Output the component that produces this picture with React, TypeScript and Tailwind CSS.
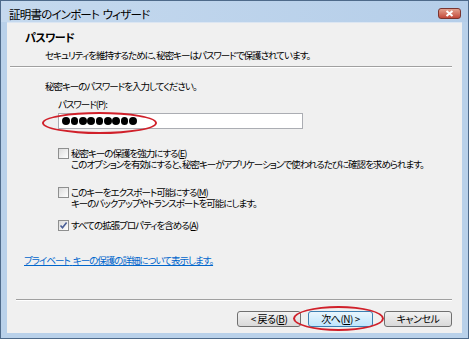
import React from "react";

function Check({ checked }: { checked?: boolean }) {
  return (
    <div className="w-[11px] h-[11px] border border-[#8e8f8f] bg-gradient-to-br from-[#dcdcdc] to-[#ffffff] flex items-center justify-center shrink-0">
      {checked && (
        <svg width="9" height="9" viewBox="0 0 9 9">
          <path d="M1.5 4.5 L3.5 6.8 L7.6 1.6" fill="none" stroke="#4a5f97" strokeWidth="1.6" />
        </svg>
      )}
    </div>
  );
}

function Btn({ w, label, def }: { w: string; label: React.ReactNode; def?: boolean }) {
  return (
    <div
      className={
        "h-[16px] rounded-[3px] border flex items-center justify-center text-[10px] tracking-[-0.5px] leading-none text-black whitespace-nowrap " +
        w +
        (def
          ? " border-[#3c7fb1] bg-gradient-to-b from-[#eaf6fd] to-[#bee6fd]"
          : " border-[#707070] bg-gradient-to-b from-[#f2f2f2] to-[#d9d9d9]")
      }
    >
      {label}
    </div>
  );
}

export default function App() {
  const dots = Array.from({ length: 9 });
  return (
    <div className="w-[469px] h-[339px] flex flex-col border border-[#4e6a8a] bg-[#b9d1ea] font-['Noto_Sans_CJK_JP',sans-serif] [font-feature-settings:'palt'] text-black overflow-hidden">
      {/* title bar */}
      <div className="h-[21px] shrink-0 flex items-start bg-gradient-to-r from-[#c5d9ee] to-[#b5cee9]">
        <div className="pl-[8px] pt-[5px] text-[11.5px] leading-[16px] tracking-[-0.8px] whitespace-nowrap">
          証明書のインポート<span className="tracking-[1px]"> </span>ウィザード
        </div>
        <div className="ml-auto mr-[7px] mt-[7px] w-[23px] h-[11px] rounded-[3px] border border-[#7a3530] bg-gradient-to-b from-[#e2a18f] to-[#c2473a] flex items-center justify-center">
          <svg width="9" height="7" viewBox="0 0 9 7">
            <path d="M1.5 1 L7.5 6 M7.5 1 L1.5 6" stroke="white" strokeWidth="2" />
          </svg>
        </div>
      </div>
      {/* client */}
      <div className="flex-1 mx-[6px] mb-[5px] bg-[#f0f0f0] relative flex flex-col border-t border-[#dce6f2] text-[9.5px] tracking-[-1px] whitespace-nowrap">
        <div className="pl-[18px] pt-[7px] text-[11px] leading-[14px] font-bold tracking-[-0.5px]">パスワード</div>
        <div className="pl-[38px] mt-[4px] leading-[14px]">セキュリティを維持するために、秘密キーはパスワードで保護されています。</div>
        <div className="ml-[3px] mr-[10px] mt-[4px] border-t border-[#a0a0a0] border-b border-b-white"></div>

        <div className="pl-[38px] mt-[11px] leading-[14px]">秘密キーのパスワードを入力してください。</div>
        <div className="pl-[51px] mt-[4px] leading-[14px]">パスワード(P):</div>
        <div className="ml-[51px] mt-[2px] w-[245px] h-[16px] bg-white border border-[#abadb3] flex items-center pl-[3px]">
          {dots.map((_, i) => (
            <div key={i} className="w-[8.33px] flex justify-center">
              <div className="w-[7.5px] h-[7.5px] rounded-full bg-black"></div>
            </div>
          ))}
        </div>

        <div className="ml-[51px] mt-[19px] flex gap-[2px] leading-[11px]">
          <div><Check /></div>
          <div>
            <div>秘密キーの保護を強力にする(<span className="underline">E</span>)</div>
            <div>このオプションを有効にすると、秘密キーがアプリケーションで使われるたびに確認を求められます。</div>
          </div>
        </div>
        <div className="ml-[51px] mt-[17px] flex gap-[2px] leading-[11px]">
          <div><Check /></div>
          <div>
            <div>このキーをエクスポート可能にする(<span className="underline">M</span>)</div>
            <div>キーのバックアップやトランスポートを可能にします。</div>
          </div>
        </div>
        <div className="ml-[51px] mt-[11px] flex gap-[2px] leading-[11px]">
          <div><Check checked /></div>
          <div>すべての拡張プロパティを含める(<span className="underline">A</span>)</div>
        </div>

        <div className="ml-[17px] mt-[24px] leading-[11px] text-[#0066cc] underline">
          プライベート<span className="tracking-[1px]"> </span>キーの保護の詳細について表示します。
        </div>

        <div className="ml-[9px] mr-[10px] mt-auto border-t border-[#a0a0a0] border-b border-b-white"></div>
        <div className="mt-[10px] mb-[6px] mr-[10px] flex justify-end">
          <Btn w="w-[64px]" label={<span>&lt; 戻る(<span className="underline">B</span>)</span>} />
          <div className="w-[7px]"></div>
          <Btn w="w-[65px]" def label={<span>次へ(<span className="underline">N</span>) &gt;</span>} />
          <div className="w-[11px]"></div>
          <Btn w="w-[68px]" label="キャンセル" />
        </div>

        {/* red annotation ellipses */}
        <div className="absolute left-[35px] top-[89px] w-[115px] h-[22px] rounded-[50%] border-[2.5px] border-[#d0202a]"></div>
        <div className="absolute left-[286px] top-[283px] w-[91px] h-[25px] rounded-[50%] border-[2.5px] border-[#d0202a]"></div>
      </div>
    </div>
  );
}
